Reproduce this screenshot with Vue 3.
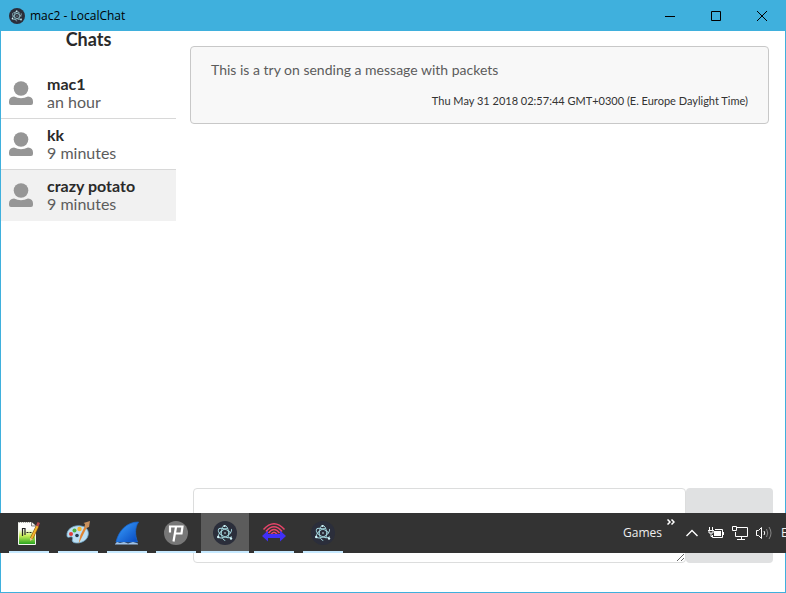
<script setup>
import { ref } from 'vue'

const chats = ref([
  { name: 'mac1', time: 'an hour' },
  { name: 'kk', time: '9 minutes' },
  { name: 'crazy potato', time: '9 minutes' },
])
const selected = ref(2)
const draft = ref('')

const tasks = [
  { id: 'notepad', label: 'Notepad++' },
  { id: 'paint', label: 'Paint' },
  { id: 'fin', label: 'Wireshark' },
  { id: 'p', label: 'Proxy' },
  { id: 'electron', label: 'LocalChat', active: true },
  { id: 'signal', label: 'Network monitor' },
  { id: 'electron', label: 'LocalChat' },
]
</script>

<template>
  <div class="window">
    <svg class="defs" aria-hidden="true">
      <symbol id="electron" viewBox="0 0 24 24">
        <circle cx="12" cy="12" r="12" fill="#2b2e3b" />
        <g fill="none" stroke="#a3d6de" stroke-width="0.9">
          <ellipse cx="12" cy="12" rx="7.5" ry="3.6" transform="rotate(28 12 12)" stroke-dasharray="32 4" />
          <ellipse cx="12" cy="12" rx="7.5" ry="3.6" transform="rotate(-32 12 12)" stroke-dasharray="32 4" />
          <ellipse cx="12" cy="12" rx="7.5" ry="3.6" transform="rotate(88 12 12)" stroke-dasharray="32 4" />
        </g>
        <g fill="#d2f5fa">
          <circle cx="12" cy="12" r="0.8" />
          <circle cx="11.500" cy="5" r="1.100" />
          <circle cx="5.200" cy="16" r="1.200" />
          <circle cx="18" cy="17.500" r="1.200" />
        </g>
      </symbol>
    </svg>

    <header class="titlebar">
      <svg class="app-icon"><use href="#electron" /></svg>
      <span class="title">mac2 - LocalChat</span>
      <div class="controls">
        <button type="button" aria-label="Minimize">
          <svg viewBox="0 0 10 10"><path d="M0 5.5H10" /></svg>
        </button>
        <button type="button" aria-label="Maximize">
          <svg viewBox="0 0 10 10"><path d="M.5 .5H9.5V9.5H.5Z" /></svg>
        </button>
        <button type="button" aria-label="Close">
          <svg viewBox="0 0 10 10"><path d="M0 0L10 10M10 0L0 10" /></svg>
        </button>
      </div>
    </header>

    <div class="body">
      <aside class="sidebar">
        <h1>Chats</h1>
        <ul>
          <li v-for="(chat, i) in chats" :key="chat.name">
            <button
              type="button"
              class="chat"
              :class="{ selected: i === selected }"
              @click="selected = i"
            >
              <svg class="user" viewBox="0 0 24 24" aria-hidden="true">
                <circle cx="12" cy="7.5" r="7.3" />
                <path d="M5 15.5Q12 19 19 15.5Q24 16 24 20.500V22Q24 24 22 24H2Q0 24 0 22V20.500Q0 16 5 15.500Z" />
              </svg>
              <span class="who">
                <strong>{{ chat.name }}</strong>
                <span class="time">{{ chat.time }}</span>
              </span>
            </button>
          </li>
        </ul>
      </aside>

      <main class="conversation">
        <article class="message">
          <p class="text">This is a try on sending a message with packets</p>
          <p class="stamp">Thu May 31 2018 02:57:44 GMT+0300 (E. Europe Daylight Time)</p>
        </article>
        <form class="composer" @submit.prevent="draft = ''">
          <textarea v-model="draft" aria-label="Message"></textarea>
          <button type="submit" aria-label="Send"></button>
        </form>
      </main>
    </div>

    <nav class="taskbar" aria-label="Taskbar">
      <button
        v-for="(task, i) in tasks"
        :key="i"
        type="button"
        class="task"
        :class="{ active: task.active }"
        :aria-label="task.label"
      >
        <svg v-if="task.id === 'notepad'" viewBox="0 0 24 24">
          <defs>
            <linearGradient id="page" x1="0" y1="0" x2="0" y2="1">
              <stop offset="0.300" stop-color="#fff" />
              <stop offset="0.600" stop-color="#c6ee58" />
              <stop offset="1" stop-color="#1fa01c" />
            </linearGradient>
          </defs>
          <path d="M1.500 1.500H14.500L18.500 5V23.500H1.500Z" fill="url(#page)" stroke="#f2f5ee" />
          <path d="M2 1.500H14" stroke="#aaa" stroke-width="1" stroke-dasharray="1 1" />
          <path d="M14.500 1V5H18.500" fill="#eee" stroke="#555" stroke-width="0.700" />
          <path d="M5.500 15V7.500H8V14M9.500 11.500H11.500M12.500 11.500H14.500" fill="none" stroke="#222" stroke-width="1.200" />
          <path d="M14.500 17.500L20.500 5" stroke="#8a5a12" stroke-width="3.200" />
          <path d="M14.500 17.500L20.500 5" stroke="#f2b42d" stroke-width="2" />
          <path d="M20.300 5L21.800 1.500" stroke="#b5484b" stroke-width="2.600" />
          <path d="M13 20V16.800L15.800 18.200Z" fill="#e8c58c" />
        </svg>
        <svg v-else-if="task.id === 'paint'" viewBox="0 0 24 24">
          <path d="M1 15C0 8 8 3.500 15 5C22 6 24 12 21 17C18 22 10 23 7 21C5 19 8 17 6 16C4 15 2 18 1 15Z" fill="#bcdff2" stroke="#6fa6c8" stroke-width="0.800" />
          <circle cx="5" cy="13" r="2" fill="#df3f3c" />
          <circle cx="8.500" cy="9.500" r="2" fill="#50b13e" />
          <circle cx="13.500" cy="8" r="2.200" fill="#f2b52d" />
          <circle cx="11" cy="14.500" r="1.800" fill="#243950" />
          <path d="M12.500 23L14.500 14L19 5L21 6L16.500 15Z" fill="#df8331" />
          <path d="M18.500 6L19 3L17.500 2L24 0L23 6L20.500 7Z" fill="#c7905d" />
        </svg>
        <svg v-else-if="task.id === 'fin'" viewBox="0 0 24 24">
          <defs>
            <linearGradient id="fin" x1="0" y1="0" x2="1" y2="1">
              <stop offset="0.200" stop-color="#3292f4" />
              <stop offset="1" stop-color="#0646bd" />
            </linearGradient>
          </defs>
          <path d="M1 21C4 9 12 1 23.500 1C19.500 7 20 14 22.500 21Z" fill="url(#fin)" stroke="#1766cf" stroke-width="0.800" />
          <path d="M0 23L2 21L5 22L9 21L13 22.500L18 21L23 22.500V23.500H0Z" fill="#9fc2e8" />
        </svg>
        <svg v-else-if="task.id === 'p'" viewBox="0 0 24 24">
          <circle cx="12" cy="12" r="12" fill="#777" />
          <path d="M6 11.500V5.500H18.500L17.500 12.500H11M12 6L9.500 20.500" fill="none" stroke="#fff" stroke-width="2.200" />
        </svg>
        <svg v-else-if="task.id === 'signal'" viewBox="0 0 24 24">
          <g fill="none" stroke="#e8456a" stroke-width="1.600">
            <path d="M1.500 8.500Q12 -3 22.500 8.500" />
            <path d="M4 10.500Q12 1 20 10.500" />
            <path d="M6.500 12Q12 5 17.500 12" />
            <path d="M9 13.500Q12 9 15 13.500" />
          </g>
          <path d="M0 15L6 9.500V13H18V9.500L24 15L18 20.500V17H6V20.500Z" fill="#4030f5" />
        </svg>
        <svg v-else><use href="#electron" /></svg>
      </button>

      <div class="tray">
        <span class="games">Games</span>
        <svg class="more" viewBox="0 0 8 6"><path d="M.5 .5L3 3L.5 5.500M4.500 .5L7 3L4.500 5.500" /></svg>
        <svg class="up" viewBox="0 0 12 8"><path d="M.5 7L6 1.500L11.500 7" /></svg>
        <svg class="battery" viewBox="0 0 16 12">
          <path d="M7 2.500H14.500V10.500H4.500V8M15.500 5V8M1.500 0V3M4.500 0V3M0 3.500H6M1 3V6H5V3M3 6V9.500H5" />
          <path d="M6 4H13V9H6Z" class="solid" />
        </svg>
        <svg class="network" viewBox="0 0 16 14">
          <path d="M5 1.500H15.500V10.500H3.500V6M9.500 11V13.500M5 13.500H13M.5 .5H4.500V4.500H.5Z" />
        </svg>
        <svg class="sound" viewBox="0 0 16 14">
          <path d="M.5 4.500H2.500L5.500 1.500V12.500L2.500 9.500H.5ZM8 5Q9.500 7 8 9" />
          <path d="M10.500 3Q13 7 10.500 11M13 1Q17 7 13 13" class="dim" />
        </svg>
        <span class="lang">E</span>
      </div>
    </nav>
  </div>
</template>

<style>
body {
  margin: 0;
}
</style>

<style scoped>
* {
  box-sizing: border-box;
}
.window {
  position: relative;
  display: flex;
  flex-direction: column;
  min-height: 100vh;
  border: 1px solid #3fb0dd;
  background: #fff;
  font-family: Lato, "Liberation Sans", sans-serif;
}
.defs {
  position: absolute;
  width: 0;
  height: 0;
}
button {
  margin: 0;
  padding: 0;
  border: 0;
  background: none;
  font: inherit;
  color: inherit;
}
.titlebar {
  display: flex;
  align-items: center;
  height: 30px;
  padding-left: 8px;
  background: #3fb0dd;
}
.app-icon {
  width: 16px;
  height: 16px;
}
.title {
  margin-left: 5px;
  font: 12px/16px "Open Sans", "Noto Sans", sans-serif;
  color: #000;
}
.controls {
  display: flex;
  margin-left: auto;
}
.controls button {
  display: flex;
  align-items: center;
  justify-content: center;
  width: 46px;
  height: 28px;
}
.controls svg {
  width: 10px;
  height: 10px;
  fill: none;
  stroke: #000;
}
.body {
  display: flex;
  flex: 1;
}
.sidebar {
  width: 175px;
}
.sidebar h1 {
  margin: 0 0 21px;
  font-size: 18px;
  line-height: 16px;
  font-weight: 700;
  text-align: center;
  color: #2a2a2a;
}
.sidebar ul {
  margin: 0;
  padding: 0;
  list-style: none;
}
.chat {
  display: flex;
  align-items: center;
  width: 100%;
  height: 51px;
  padding-left: 8px;
  gap: 14px;
  border-bottom: 1px solid #d8d8d8;
  text-align: left;
}
.chat.selected {
  border-color: #f1f1f1;
  background: #f1f1f1;
}
.user {
  width: 24px;
  height: 24px;
  fill: #969696;
}
.who {
  display: flex;
  flex-direction: column;
  font-size: 16px;
  line-height: 18px;
}
.who strong {
  font-weight: 700;
  color: #2a2a2a;
}
.time {
  color: #5c5c5c;
}
.conversation {
  display: flex;
  flex: 1;
  flex-direction: column;
  justify-content: space-between;
  padding: 15px 12px 29px 14px;
}
.message {
  margin-right: 4px;
  padding: 14px 20px;
  border: 1px solid #c8c8c8;
  border-radius: 4px;
  background: #f8f8f8;
}
.message p {
  margin: 0;
}
.text {
  font-size: 14px;
  line-height: 18px;
  color: #5c5c5c;
}
.message .stamp {
  margin-top: 14px;
  font-size: 11px;
  line-height: 16px;
  text-align: right;
  color: #333;
}
.composer {
  display: flex;
  height: 75px;
  padding-left: 3px;
}
.composer textarea {
  flex: 1;
  min-width: 0;
  padding: 12px;
  border: 1px solid #dcdddd;
  border-radius: 4px;
  outline: 0;
  font: 14px/18px Lato, sans-serif;
}
.composer button {
  width: 87px;
  border-radius: 4px;
  background: #e0e1e2;
}
.taskbar {
  position: absolute;
  right: -1px;
  bottom: 39px;
  left: -1px;
  display: flex;
  gap: 1px;
  height: 40px;
  padding-left: 5px;
  background: #333;
  overflow: hidden;
}
.task {
  display: flex;
  flex: none;
  flex-direction: column;
  align-items: center;
  justify-content: space-between;
  width: 48px;
  padding-top: 8px;
}
.task svg {
  width: 24px;
  height: 24px;
}
.task::after {
  width: 40px;
  height: 2px;
  background: #c6e9ff;
  content: "";
}
.task.active {
  background: #5c5c5c;
}
.task.active::after {
  width: 48px;
}
.tray {
  display: flex;
  align-items: center;
  width: 163px;
  margin-left: auto;
  font: 12px/16px "Open Sans", "Noto Sans", sans-serif;
  color: #eee;
}
.tray svg {
  flex: none;
  fill: none;
  stroke: #fff;
}
.tray .solid {
  fill: #fff;
  stroke: none;
}
.tray .dim {
  stroke: #888;
}
.games {
  flex: none;
  width: 44px;
}
.tray .more {
  width: 8px;
  height: 6px;
  margin-bottom: 22px;
  stroke-width: 1.5;
}
.tray .up {
  width: 12px;
  height: 8px;
  margin-left: 11px;
  stroke-width: 1.4;
}
.battery {
  width: 16px;
  height: 12px;
  margin-left: 10px;
}
.network {
  width: 16px;
  height: 14px;
  margin-left: 8px;
}
.sound {
  width: 16px;
  height: 14px;
  margin-left: 8px;
}
.lang {
  flex: none;
  margin-left: 9px;
}
</style>
